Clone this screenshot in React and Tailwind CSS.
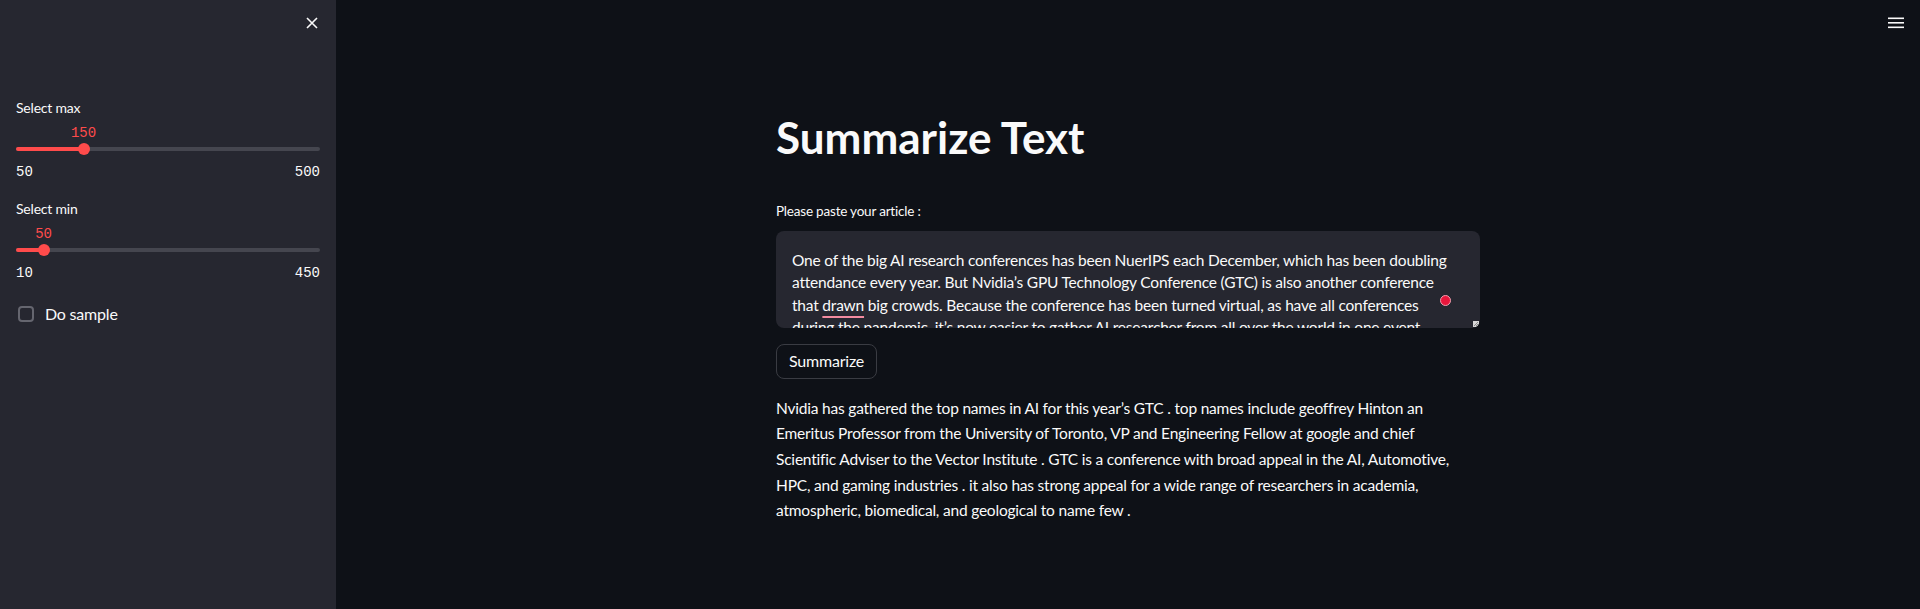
import React from 'react';

const sans = "font-['Lato','Noto_Sans',sans-serif]";
const mono = "font-['Liberation_Mono','DejaVu_Sans_Mono',monospace]";

const article = [
  'One of the big AI research conferences has been NuerIPS each December, which has been doubling',
  'attendance every year. But Nvidia’s GPU Technology Conference (GTC) is also another conference',
  null,
  'during the pandemic, it’s now easier to gather AI researcher from all over the world in one event.',
];

const summary = [
  'Nvidia has gathered the top names in AI for this year’s GTC . top names include geoffrey Hinton an',
  'Emeritus Professor from the University of Toronto, VP and Engineering Fellow at google and chief',
  'Scientific Adviser to the Vector Institute . GTC is a conference with broad appeal in the AI, Automotive,',
  'HPC, and gaming industries . it also has strong appeal for a wide range of researchers in academia,',
  'atmospheric, biomedical, and geological to name few .',
];

function Slider({ label, value, min, max }) {
  const pct = ((value - min) / (max - min)) * 100;
  return (
    <div className="flex flex-col">
      <div className="text-sm leading-5 tracking-[-0.2px] text-[#fafafa]">{label}</div>
      <div className="relative mt-[5px] h-5">
        <span
          className={`absolute top-0 -translate-x-1/2 text-sm leading-5 text-[#ff4b4b] ${mono}`}
          style={{ left: `${pct}%` }}
        >
          {value}
        </span>
      </div>
      <div className="relative h-3">
        <div className="absolute left-0 right-0 top-1/2 h-1 -translate-y-1/2 rounded-full bg-[#45464f]" />
        <div
          className="absolute left-0 top-1/2 h-1 -translate-y-1/2 rounded-full bg-[#ff4b4b]"
          style={{ width: `${pct}%` }}
        />
        <div
          className="absolute top-1/2 h-3 w-3 -translate-x-1/2 -translate-y-1/2 rounded-full bg-[#ff4b4b]"
          style={{ left: `${pct}%` }}
        />
      </div>
      <div className={`mt-[7px] flex justify-between text-sm leading-5 text-[#fafafa] ${mono}`}>
        <span>{min}</span>
        <span>{max}</span>
      </div>
    </div>
  );
}

function Sidebar() {
  return (
    <aside className="flex w-[336px] shrink-0 flex-col bg-[#262730]">
      <div className="flex h-[46px] items-center justify-end pr-[17px]">
        <svg width="14" height="14" viewBox="0 0 14 14" fill="none" stroke="#fafafa" strokeWidth="1.6">
          <path d="M2 2l10 10M12 2L2 12" />
        </svg>
      </div>
      <div className="mt-[52px] flex flex-col gap-[17px] px-4">
        <Slider label="Select max" value={150} min={50} max={500} />
        <Slider label="Select min" value={50} min={10} max={450} />
      </div>
      <div className="mt-[19px] flex h-6 items-center gap-[11px] px-[18px]">
        <div className="h-4 w-4 rounded-[4px] border-2 border-[#65666f]" />
        <span className="text-base tracking-[-0.2px] text-[#fafafa]">Do sample</span>
      </div>
    </aside>
  );
}

export default function App() {
  return (
    <div className={`flex h-screen w-full overflow-hidden bg-[#0e1117] ${sans}`}>
      <Sidebar />
      <main className="flex min-w-0 flex-1 flex-col">
        <div className="flex h-[46px] items-center justify-end pr-4">
          <svg width="16" height="12" viewBox="0 0 16 12" fill="#fafafa">
            <rect x="0" y="0.5" width="16" height="1.6" />
            <rect x="0" y="5" width="16" height="1.6" />
            <rect x="0" y="9.5" width="16" height="1.6" />
          </svg>
        </div>
        <div className="mx-auto flex w-[704px] flex-col">
          <h1 className="mt-[65px] text-[44px] font-bold leading-[1.2] text-[#fafafa]">Summarize Text</h1>
          <label className="mt-[37px] text-[13.5px] leading-5 tracking-[-0.2px] text-[#fafafa]">
            Please paste your article :
          </label>
          <div className="relative mt-[10px] h-[97px] overflow-hidden rounded-lg bg-[#262730] pl-4 pt-[18px] text-[15.5px] leading-[22.4px] tracking-[-0.2px] text-[#fafafa]">
            {article.map((line, i) =>
              line === null ? (
                <div key={i} className="whitespace-nowrap">
                  that{' '}
                  <span className="underline decoration-[#f28ba0] decoration-2 underline-offset-[5px]">drawn</span>{' '}
                  big crowds. Because the conference has been turned virtual, as have all conferences
                </div>
              ) : (
                <div key={i} className="whitespace-nowrap">{line}</div>
              )
            )}
            <div className="absolute right-[29px] top-[64px] h-[11px] w-[11px] rounded-full border border-[#f0a0b0] bg-[#e8173c]" />
            <svg className="absolute bottom-[1px] right-[1px]" width="6" height="6" viewBox="0 0 6 6">
              <rect width="6" height="6" fill="#d8d8d8" />
              <path d="M1 5L5 1M3 5L5 3" stroke="#777" strokeWidth="0.8" />
            </svg>
          </div>
          <div className="mt-4">
            <button className="h-[35px] rounded-lg border border-[#3a3c43] bg-[#0e1117] px-[12px] text-base tracking-[-0.2px] text-[#fafafa]">
              Summarize
            </button>
          </div>
          <div className="mt-[17px] text-[15.5px] leading-[25.6px] tracking-[-0.2px] text-[#fafafa]">
            {summary.map((line, i) => (
              <div key={i} className="whitespace-nowrap">{line}</div>
            ))}
          </div>
        </div>
      </main>
    </div>
  );
}
